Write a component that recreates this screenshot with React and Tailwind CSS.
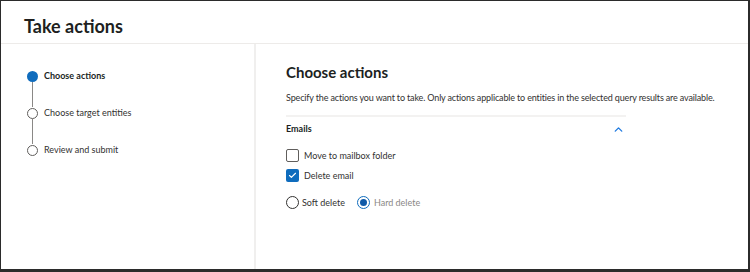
import { ChevronUp, Check } from 'lucide-react';

const steps = [
  { label: 'Choose actions', active: true },
  { label: 'Choose target entities', active: false },
  { label: 'Review and submit', active: false },
];

function Stepper() {
  return (
    <div className="pt-[26px] pl-[26px]">
      {steps.map((s, i) => (
        <div key={s.label}>
          <div className="flex items-center h-[12px]">
            <span
              className={
                s.active
                  ? 'w-[11px] h-[11px] rounded-full bg-[#0f6cbd]'
                  : 'w-[11px] h-[11px] rounded-full border border-[#605e5c] bg-white'
              }
            />
            <span
              className={
                s.active
                  ? 'ml-[6px] text-[9px] font-bold text-[#201f1e]'
                  : 'ml-[6px] text-[9px] text-[#323130]'
              }
            >
              {s.label}
            </span>
          </div>
          {i < steps.length - 1 && (
            <div className="ml-[5px] w-px h-[25px] bg-[#8a8886]" />
          )}
        </div>
      ))}
    </div>
  );
}

export default function App() {
  return (
    <div
      className="w-[750px] h-[272px] bg-white border-l border-t border-r-2 border-b-[3px] border-[#2b2b2b] flex flex-col overflow-hidden"
      style={{ fontFamily: 'Lato, "Open Sans", sans-serif' }}
    >
      <div className="h-[43px] shrink-0 border-b border-[#edebe9] flex items-center pl-[23px] pt-[9px]">
        <h1 className="text-[18px] font-bold text-[#201f1e]">Take actions</h1>
      </div>
      <div className="flex flex-1">
        <div className="w-[255px] shrink-0 border-r-2 border-[#f0efee]">
          <Stepper />
        </div>
        <div className="flex-1 min-w-0 pl-[30px] pt-[18px]">
          <h2 className="text-[15px] font-bold text-[#201f1e] leading-[20px]">Choose actions</h2>
          <p className="mt-[9px] text-[9px] text-[#323130] leading-[14px] whitespace-nowrap tracking-[-0.15px]">
            Specify the actions you want to take. Only actions applicable to entities in the selected query results are available.
          </p>
          <div className="w-[340px] mt-[10px] border-t-2 border-[#f3f2f1]" />
          <div className="w-[340px] flex items-center justify-between mt-[5px] h-[14px]">
            <span className="text-[9px] font-bold text-[#201f1e]">Emails</span>
            <ChevronUp className="w-[13px] h-[13px] text-[#1f7ae0] mr-[1px]" strokeWidth={2.5} />
          </div>
          <div className="mt-[13px] flex flex-col gap-[7px]">
            <label className="flex items-center h-[13px]">
              <span className="w-[13px] h-[13px] border border-[#605e5c] rounded-[2px] bg-white" />
              <span className="ml-[5px] text-[9px] text-[#323130]">Move to mailbox folder</span>
            </label>
            <label className="flex items-center h-[13px]">
              <span className="w-[13px] h-[13px] rounded-[2px] bg-[#0f6cbd] flex items-center justify-center">
                <Check className="w-[9px] h-[9px] text-white" strokeWidth={3} />
              </span>
              <span className="ml-[5px] text-[9px] text-[#323130]">Delete email</span>
            </label>
          </div>
          <div className="mt-[14px] flex items-center h-[13px]">
            <span className="w-[13px] h-[13px] rounded-full border border-[#323130] bg-white" />
            <span className="ml-[3px] text-[9px] text-[#323130]">Soft delete</span>
            <span className="ml-[12px] w-[13px] h-[13px] rounded-full border border-[#0f6cbd] bg-white flex items-center justify-center">
              <span className="w-[7px] h-[7px] rounded-full bg-[#0f5aa8]" />
            </span>
            <span className="ml-[4px] text-[9px] text-[#8a8886]">Hard delete</span>
          </div>
        </div>
      </div>
    </div>
  );
}
